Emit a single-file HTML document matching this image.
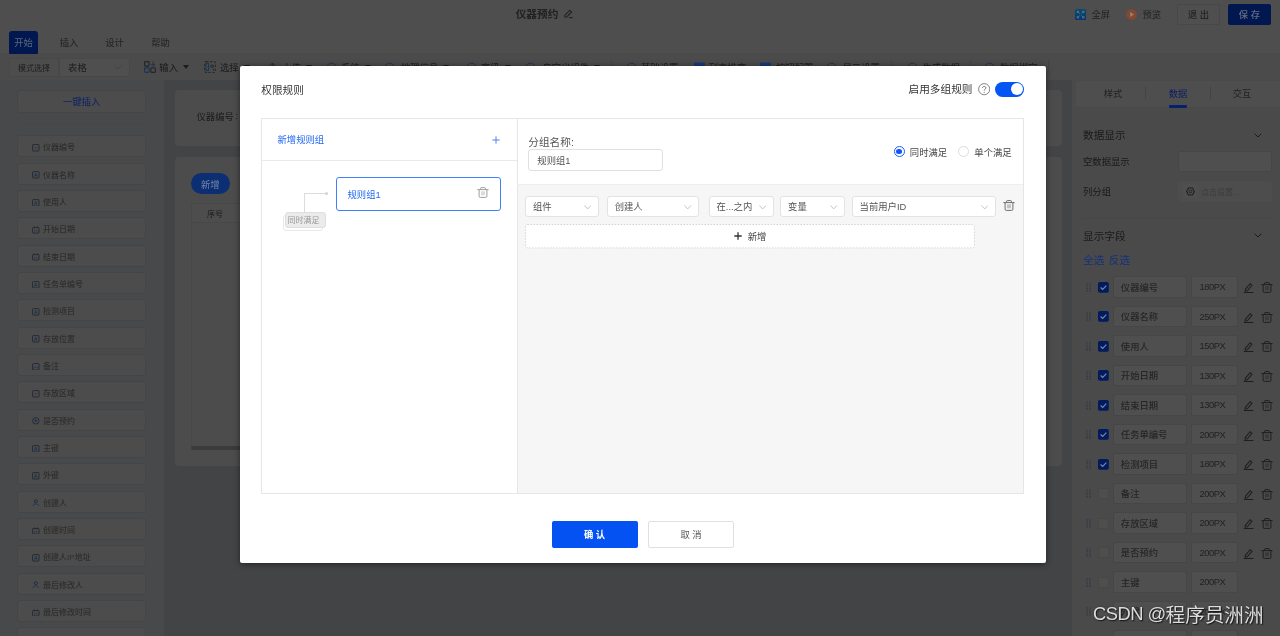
<!DOCTYPE html>
<html lang="zh-CN">
<head>
<meta charset="utf-8">
<title>仪器预约</title>
<style>
html,body{margin:0;padding:0;}
body{width:1280px;height:636px;overflow:hidden;background:#434446;font-family:"Liberation Sans","Noto Sans CJK SC",sans-serif;font-size:9.33px;color:#1d1d1d;}
#app{position:relative;width:1280px;height:636px;overflow:hidden;background:#434446;will-change:transform;}
#app div,#app span,#app svg{position:absolute;box-sizing:border-box;}
.c{display:flex;align-items:center;justify-content:center;white-space:nowrap;}
.l{display:flex;align-items:center;justify-content:flex-start;white-space:nowrap;}
.t{white-space:nowrap;line-height:1;}
</style>
</head>
<body>
<div id="app">
<!-- top bar -->
<div style="left:0px;top:0px;width:1280px;height:53px;background:#4e4e4e;"></div><div style="left:0px;top:53px;width:1280px;height:27px;background:#4b4b4b;"></div><div class="c" style="left:500px;top:3.9px;width:74px;height:20px;font-size:10.67px;font-weight:bold;color:#202020;">仪器预约</div><svg style="left:563.2px;top:8.4px;width:11px;height:11px" viewBox="0 0 11 11" fill="none" stroke="#222" stroke-width="1.1"><path d="M2 7.2 L6.8 2.2 L8.6 4 L3.8 9 L1.8 9.2 Z"/><path d="M6 9.6 H9.6"/></svg>
<div class="c" style="left:9px;top:31px;width:29px;height:22.8px;background:#00184f;border-radius:3px 3px 1px 1px;color:#5d6682;padding-bottom:1.5px;">开始</div><div class="c" style="left:54px;top:30px;width:30px;height:23px;color:#222222;">插入</div><div class="c" style="left:99.5px;top:30px;width:30px;height:23px;color:#222222;">设计</div><div class="c" style="left:145.5px;top:30px;width:30px;height:23px;color:#222222;">帮助</div><svg style="left:1075px;top:8.7px;width:11.2px;height:11.2px" viewBox="0 0 11 11"><defs><linearGradient id="fsg" x1="0" y1="0" x2="0" y2="1"><stop offset="0" stop-color="#0b4c66"/><stop offset="1" stop-color="#093474"/></linearGradient></defs><rect x="0" y="0" width="11" height="11" rx="2" fill="url(#fsg)"/><g fill="none" stroke="#647a90" stroke-width="0.9"><path d="M2.2 4 V2.2 H4 M2.4 2.4 L4.6 4.6"/><path d="M7 2.2 H8.8 V4 M8.6 2.4 L6.4 4.6"/><path d="M2.2 7 V8.8 H4 M2.4 8.6 L4.6 6.4"/><path d="M7 8.8 H8.8 V7 M8.6 8.6 L6.4 6.4"/></g></svg>
<div class="l" style="left:1091.5px;top:4.3px;width:22px;height:20px;color:#222222;">全屏</div><svg style="left:1126.2px;top:8.9px;width:11px;height:11px" viewBox="0 0 11 11"><circle cx="5.5" cy="5.5" r="5.4" fill="#824830"/><path d="M4.1 3.1 L8.1 5.5 L4.1 7.9 Z" fill="#93807a"/></svg>
<div class="l" style="left:1142.5px;top:4.3px;width:22px;height:20px;color:#222222;">预览</div><div class="c" style="left:1176.8px;top:4.1px;width:43.4px;height:21.4px;border:1px solid #484848;border-radius:2px;color:#242424;font-weight:500;background:#4f4f4f;padding-bottom:1px;">退 出</div><div class="c" style="left:1227.8px;top:4.1px;width:43.4px;height:21.4px;border-radius:2px;color:#646b82;font-weight:500;background:#00184f;padding-bottom:1px;">保 存</div><!-- toolbar -->
<div class="c" style="left:8.8px;top:57.9px;width:50.6px;height:19px;border:1px solid #484848;border-radius:2px 0 0 2px;background:#4d4d4d;font-size:8px;color:#1c1c1c;">模式选择</div><div class="l" style="left:58.6px;top:57.9px;width:71.3px;height:19px;border:1px solid #484848;border-radius:0 2px 2px 0;background:#4f4f4f;color:#1c1c1c;padding-left:8.5px;">表格</div><svg style="left:113.5px;top:64.5px;width:8px;height:5px" viewBox="0 0 8 5" fill="none" stroke="#404040" stroke-width="0.8"><path d="M0.5 0.5 L4 4 L7.5 0.5"/></svg>
<svg style="left:143.8px;top:61px;width:12px;height:12px" viewBox="0 0 12 12" fill="none" stroke="#262626" stroke-width="1.15"><rect x="0.6" y="0.6" width="4.5" height="4.5" rx="0.8"/><rect x="0.6" y="6.9" width="4.5" height="4.5" rx="0.8" stroke="#1b3552"/><rect x="6.9" y="6.9" width="4.5" height="4.5" rx="0.8"/><path d="M6.7 3.7 H11.4 M9.2 0.7 V5.5" stroke="#1b3552"/></svg><div class="l" style="left:159.3px;top:56.5px;width:60px;height:20px;color:#1a1a1a;">输入</div><svg style="left:183.2px;top:65px;width:6px;height:4px" viewBox="0 0 6 4"><path d="M0 0 H6 L3 4 Z" fill="#1c1c1c"/></svg>
<svg style="left:204.2px;top:61px;width:12px;height:12px" viewBox="0 0 12 12" fill="none" stroke="#292929" stroke-width="1.05"><rect x="0.6" y="0.6" width="10.8" height="10.8" rx="1.6" stroke-dasharray="2.3 1.5"/><rect x="2" y="2.6" width="2.6" height="6.8" stroke="#1b3552"/><circle cx="8.1" cy="5.2" r="1.3"/><path d="M9 8 L10.1 9.6"/></svg><div class="l" style="left:220px;top:56.5px;width:60px;height:20px;color:#1a1a1a;">选择</div><svg style="left:244px;top:65px;width:6px;height:4px" viewBox="0 0 6 4"><path d="M0 0 H6 L3 4 Z" fill="#1c1c1c"/></svg>
<svg style="left:266.5px;top:62.3px;width:11px;height:11px" viewBox="0 0 11 11" fill="none" stroke="#2a2a2a" stroke-width="1"><path d="M1 5.5 L5.5 1 L10 5.5 M5.5 1.2 V8 M1 10 H10"/></svg><div class="l" style="left:282.5px;top:56.5px;width:60px;height:20px;color:#1a1a1a;">上传</div><svg style="left:306px;top:65px;width:6px;height:4px" viewBox="0 0 6 4"><path d="M0 0 H6 L3 4 Z" fill="#1c1c1c"/></svg>
<svg style="left:326px;top:62.3px;width:11px;height:11px" viewBox="0 0 11 11" fill="none" stroke="#1f3350" stroke-width="1"><circle cx="5.5" cy="5.5" r="4.4"/></svg><div class="l" style="left:341px;top:56.5px;width:60px;height:20px;color:#1a1a1a;">系统</div><svg style="left:365px;top:65px;width:6px;height:4px" viewBox="0 0 6 4"><path d="M0 0 H6 L3 4 Z" fill="#1c1c1c"/></svg>
<svg style="left:384px;top:62.3px;width:11px;height:11px" viewBox="0 0 11 11" fill="none" stroke="#1f3350" stroke-width="1"><circle cx="5.5" cy="5.5" r="4.4"/></svg><div class="l" style="left:401px;top:56.5px;width:60px;height:20px;color:#1a1a1a;">地理信息</div><svg style="left:443px;top:65px;width:6px;height:4px" viewBox="0 0 6 4"><path d="M0 0 H6 L3 4 Z" fill="#1c1c1c"/></svg>
<svg style="left:466px;top:62.3px;width:11px;height:11px" viewBox="0 0 11 11" fill="none" stroke="#1f3350" stroke-width="1"><circle cx="5.5" cy="5.5" r="4.4"/></svg><div class="l" style="left:481px;top:56.5px;width:60px;height:20px;color:#1a1a1a;">高级</div><svg style="left:505px;top:65px;width:6px;height:4px" viewBox="0 0 6 4"><path d="M0 0 H6 L3 4 Z" fill="#1c1c1c"/></svg>
<svg style="left:525px;top:62.3px;width:11px;height:11px" viewBox="0 0 11 11" fill="none" stroke="#1f3350" stroke-width="1"><circle cx="5.5" cy="5.5" r="4.4"/></svg><div class="l" style="left:542.5px;top:56.5px;width:60px;height:20px;color:#1a1a1a;">自定义组件</div><svg style="left:594px;top:65px;width:6px;height:4px" viewBox="0 0 6 4"><path d="M0 0 H6 L3 4 Z" fill="#1c1c1c"/></svg>
<div style="left:610.5px;top:60px;width:1px;height:14px;background:#444444;"></div><svg style="left:626px;top:62.3px;width:11px;height:11px" viewBox="0 0 11 11" fill="none" stroke="#1f3350" stroke-width="1"><circle cx="5.5" cy="5.5" r="4.4"/></svg><div class="l" style="left:641px;top:56.5px;width:60px;height:20px;color:#1a1a1a;">基础设置</div>
<svg style="left:693.5px;top:61.5px;width:11px;height:11px" viewBox="0 0 11 11"><rect x="0" y="0.5" width="11" height="10" rx="1" fill="#17397a"/></svg><div class="l" style="left:708.7px;top:56.5px;width:60px;height:20px;color:#1a1a1a;">列表排序</div>
<svg style="left:760px;top:61.5px;width:11px;height:11px" viewBox="0 0 11 11"><rect x="0" y="0.5" width="11" height="10" rx="1" fill="#17397a"/></svg><div class="l" style="left:776px;top:56.5px;width:60px;height:20px;color:#1a1a1a;">按钮配置</div>
<svg style="left:826px;top:62.3px;width:11px;height:11px" viewBox="0 0 11 11" fill="none" stroke="#1f3350" stroke-width="1"><circle cx="5.5" cy="5.5" r="4.4"/></svg><div class="l" style="left:842.5px;top:56.5px;width:60px;height:20px;color:#1a1a1a;">显示设置</div>
<div style="left:891px;top:60px;width:1px;height:14px;background:#444444;"></div><svg style="left:907px;top:62.3px;width:11px;height:11px" viewBox="0 0 11 11" fill="none" stroke="#1f3350" stroke-width="1"><circle cx="5.5" cy="5.5" r="4.4"/></svg><div class="l" style="left:922.5px;top:56.5px;width:60px;height:20px;color:#1a1a1a;">生成数据</div>
<div style="left:969.5px;top:60px;width:1px;height:14px;background:#444444;"></div><svg style="left:984px;top:62.3px;width:11px;height:11px" viewBox="0 0 11 11" fill="none" stroke="#1f3350" stroke-width="1"><circle cx="5.5" cy="5.5" r="4.4"/></svg><div class="l" style="left:1000px;top:56.5px;width:60px;height:20px;color:#1a1a1a;">数据绑定</div>
<div style="left:1048px;top:60px;width:1px;height:14px;background:#444444;"></div><!-- sidebar -->
<div style="left:0px;top:80px;width:163.5px;height:556px;background:#48494b;"></div><div class="c" style="left:17.3px;top:90.3px;width:128.6px;height:22.3px;border:1px solid #444546;border-radius:3px;background:#4c4c4c;color:#0d2268;padding-bottom:0.6px;">一键插入</div><div style="left:17.3px;top:122.8px;width:128.6px;height:1px;background:#464749;"></div><div style="left:17.3px;top:135.2px;width:128.6px;height:22.0px;border:1px solid #444546;border-radius:3px;background:#4c4c4c;"><svg style="left:13.9px;top:7.9px;width:7.6px;height:7.6px" viewBox="0 0 8 8" fill="none" stroke="#26282f" stroke-width="0.95"><rect x="0.6" y="0.6" width="6.8" height="6.8" rx="0.8"/><path d="M2.4 3.3 L4 4.9 L5.6 3.3" stroke="#1b3663"/></svg><span class="l" style="left:24.8px;top:0.5px;height:20px;font-size:8px;color:#2e2e2e;font-weight:500;">仪器编号</span></div>
<div style="left:17.3px;top:162.53px;width:128.6px;height:22.0px;border:1px solid #444546;border-radius:3px;background:#4c4c4c;"><svg style="left:13.9px;top:7.9px;width:7.6px;height:7.6px" viewBox="0 0 8 8" fill="none" stroke="#26282f" stroke-width="0.95"><rect x="0.6" y="0.6" width="6.8" height="6.8" rx="0.8"/><path d="M2.6 6.1 L4 2.1 L5.4 6.1 M3.1 4.8 H4.9" stroke="#1b3663"/></svg><span class="l" style="left:24.8px;top:0.5px;height:20px;font-size:8px;color:#2e2e2e;font-weight:500;">仪器名称</span></div>
<div style="left:17.3px;top:189.87px;width:128.6px;height:22.0px;border:1px solid #444546;border-radius:3px;background:#4c4c4c;"><svg style="left:13.9px;top:7.9px;width:7.6px;height:7.6px" viewBox="0 0 8 8" fill="none" stroke="#26282f" stroke-width="0.95"><rect x="0.6" y="0.6" width="6.8" height="6.8" rx="0.8"/><path d="M2.6 6.1 L4 2.1 L5.4 6.1 M3.1 4.8 H4.9" stroke="#1b3663"/></svg><span class="l" style="left:24.8px;top:0.5px;height:20px;font-size:8px;color:#2e2e2e;font-weight:500;">使用人</span></div>
<div style="left:17.3px;top:217.2px;width:128.6px;height:22.0px;border:1px solid #444546;border-radius:3px;background:#4c4c4c;"><svg style="left:13.9px;top:7.9px;width:7.6px;height:7.6px" viewBox="0 0 8 8" fill="none" stroke="#26282f" stroke-width="0.95"><rect x="0.6" y="1.6" width="6.8" height="5.8" rx="0.8"/><path d="M2.3 0.4 V2.2 M5.7 0.4 V2.2"/><path d="M2.8 4 V6 M5.2 4 V6" stroke="#1b3663"/></svg><span class="l" style="left:24.8px;top:0.5px;height:20px;font-size:8px;color:#2e2e2e;font-weight:500;">开始日期</span></div>
<div style="left:17.3px;top:244.53px;width:128.6px;height:22.0px;border:1px solid #444546;border-radius:3px;background:#4c4c4c;"><svg style="left:13.9px;top:7.9px;width:7.6px;height:7.6px" viewBox="0 0 8 8" fill="none" stroke="#26282f" stroke-width="0.95"><rect x="0.6" y="1.6" width="6.8" height="5.8" rx="0.8"/><path d="M2.3 0.4 V2.2 M5.7 0.4 V2.2"/><path d="M2.8 4 V6 M5.2 4 V6" stroke="#1b3663"/></svg><span class="l" style="left:24.8px;top:0.5px;height:20px;font-size:8px;color:#2e2e2e;font-weight:500;">结束日期</span></div>
<div style="left:17.3px;top:271.87px;width:128.6px;height:22.0px;border:1px solid #444546;border-radius:3px;background:#4c4c4c;"><svg style="left:13.9px;top:7.9px;width:7.6px;height:7.6px" viewBox="0 0 8 8" fill="none" stroke="#26282f" stroke-width="0.95"><rect x="0.6" y="0.6" width="6.8" height="6.8" rx="0.8"/><path d="M2.6 6.1 L4 2.1 L5.4 6.1 M3.1 4.8 H4.9" stroke="#1b3663"/></svg><span class="l" style="left:24.8px;top:0.5px;height:20px;font-size:8px;color:#2e2e2e;font-weight:500;">任务单编号</span></div>
<div style="left:17.3px;top:299.2px;width:128.6px;height:22.0px;border:1px solid #444546;border-radius:3px;background:#4c4c4c;"><svg style="left:13.9px;top:7.9px;width:7.6px;height:7.6px" viewBox="0 0 8 8" fill="none" stroke="#26282f" stroke-width="0.95"><rect x="0.6" y="0.6" width="6.8" height="6.8" rx="0.8"/><path d="M2.6 6.1 L4 2.1 L5.4 6.1 M3.1 4.8 H4.9" stroke="#1b3663"/></svg><span class="l" style="left:24.8px;top:0.5px;height:20px;font-size:8px;color:#2e2e2e;font-weight:500;">检测项目</span></div>
<div style="left:17.3px;top:326.53px;width:128.6px;height:22.0px;border:1px solid #444546;border-radius:3px;background:#4c4c4c;"><svg style="left:13.9px;top:7.9px;width:7.6px;height:7.6px" viewBox="0 0 8 8" fill="none" stroke="#26282f" stroke-width="0.95"><rect x="0.6" y="0.6" width="6.8" height="6.8" rx="0.8"/><path d="M2.6 6.1 L4 2.1 L5.4 6.1 M3.1 4.8 H4.9" stroke="#1b3663"/></svg><span class="l" style="left:24.8px;top:0.5px;height:20px;font-size:8px;color:#2e2e2e;font-weight:500;">存放位置</span></div>
<div style="left:17.3px;top:353.86px;width:128.6px;height:22.0px;border:1px solid #444546;border-radius:3px;background:#4c4c4c;"><svg style="left:13.9px;top:7.9px;width:7.6px;height:7.6px" viewBox="0 0 8 8" fill="none" stroke="#26282f" stroke-width="0.95"><rect x="0.6" y="0.6" width="6.8" height="6.8" rx="0.8"/><path d="M1.4 6 L3.2 3.8 L4.6 5.2 L5.4 4.4 L6.6 6" stroke="#1b3663"/></svg><span class="l" style="left:24.8px;top:0.5px;height:20px;font-size:8px;color:#2e2e2e;font-weight:500;">备注</span></div>
<div style="left:17.3px;top:381.2px;width:128.6px;height:22.0px;border:1px solid #444546;border-radius:3px;background:#4c4c4c;"><svg style="left:13.9px;top:7.9px;width:7.6px;height:7.6px" viewBox="0 0 8 8" fill="none" stroke="#26282f" stroke-width="0.95"><rect x="0.6" y="0.6" width="6.8" height="6.8" rx="0.8"/><path d="M2.4 3.3 L4 4.9 L5.6 3.3" stroke="#1b3663"/></svg><span class="l" style="left:24.8px;top:0.5px;height:20px;font-size:8px;color:#2e2e2e;font-weight:500;">存放区域</span></div>
<div style="left:17.3px;top:408.53px;width:128.6px;height:22.0px;border:1px solid #444546;border-radius:3px;background:#4c4c4c;"><svg style="left:13.9px;top:7.9px;width:7.6px;height:7.6px" viewBox="0 0 8 8" fill="none" stroke="#26282f" stroke-width="0.95"><circle cx="4" cy="4" r="3.4"/><circle cx="4" cy="4" r="1.5" fill="#1b3663" stroke="none"/></svg><span class="l" style="left:24.8px;top:0.5px;height:20px;font-size:8px;color:#2e2e2e;font-weight:500;">是否预约</span></div>
<div style="left:17.3px;top:435.86px;width:128.6px;height:22.0px;border:1px solid #444546;border-radius:3px;background:#4c4c4c;"><svg style="left:13.9px;top:7.9px;width:7.6px;height:7.6px" viewBox="0 0 8 8" fill="none" stroke="#26282f" stroke-width="0.95"><rect x="0.6" y="0.6" width="6.8" height="6.8" rx="0.8"/><path d="M2.6 6.1 L4 2.1 L5.4 6.1 M3.1 4.8 H4.9" stroke="#1b3663"/></svg><span class="l" style="left:24.8px;top:0.5px;height:20px;font-size:8px;color:#2e2e2e;font-weight:500;">主键</span></div>
<div style="left:17.3px;top:463.2px;width:128.6px;height:22.0px;border:1px solid #444546;border-radius:3px;background:#4c4c4c;"><svg style="left:13.9px;top:7.9px;width:7.6px;height:7.6px" viewBox="0 0 8 8" fill="none" stroke="#26282f" stroke-width="0.95"><rect x="0.6" y="0.6" width="6.8" height="6.8" rx="0.8"/><path d="M2.6 6.1 L4 2.1 L5.4 6.1 M3.1 4.8 H4.9" stroke="#1b3663"/></svg><span class="l" style="left:24.8px;top:0.5px;height:20px;font-size:8px;color:#2e2e2e;font-weight:500;">外键</span></div>
<div style="left:17.3px;top:490.53px;width:128.6px;height:22.0px;border:1px solid #444546;border-radius:3px;background:#4c4c4c;"><svg style="left:13.9px;top:7.9px;width:7.6px;height:7.6px" viewBox="0 0 8 8" fill="none" stroke="#26282f" stroke-width="0.95"><circle cx="4" cy="2.4" r="1.6"/><path d="M0.8 7.4 C1.2 4.6 6.8 4.6 7.2 7.4" stroke="#1b3663"/></svg><span class="l" style="left:24.8px;top:0.5px;height:20px;font-size:8px;color:#2e2e2e;font-weight:500;">创建人</span></div>
<div style="left:17.3px;top:517.86px;width:128.6px;height:22.0px;border:1px solid #444546;border-radius:3px;background:#4c4c4c;"><svg style="left:13.9px;top:7.9px;width:7.6px;height:7.6px" viewBox="0 0 8 8" fill="none" stroke="#26282f" stroke-width="0.95"><rect x="0.6" y="1.6" width="6.8" height="5.8" rx="0.8"/><path d="M2.3 0.4 V2.2 M5.7 0.4 V2.2"/><path d="M2.8 4 V6 M5.2 4 V6" stroke="#1b3663"/></svg><span class="l" style="left:24.8px;top:0.5px;height:20px;font-size:8px;color:#2e2e2e;font-weight:500;">创建时间</span></div>
<div style="left:17.3px;top:545.19px;width:128.6px;height:22.0px;border:1px solid #444546;border-radius:3px;background:#4c4c4c;"><svg style="left:13.9px;top:7.9px;width:7.6px;height:7.6px" viewBox="0 0 8 8" fill="none" stroke="#26282f" stroke-width="0.95"><rect x="0.6" y="0.6" width="6.8" height="6.8" rx="0.8"/><path d="M2.6 6.1 L4 2.1 L5.4 6.1 M3.1 4.8 H4.9" stroke="#1b3663"/></svg><span class="l" style="left:24.8px;top:0.5px;height:20px;font-size:8px;color:#2e2e2e;font-weight:500;">创建人IP地址</span></div>
<div style="left:17.3px;top:572.53px;width:128.6px;height:22.0px;border:1px solid #444546;border-radius:3px;background:#4c4c4c;"><svg style="left:13.9px;top:7.9px;width:7.6px;height:7.6px" viewBox="0 0 8 8" fill="none" stroke="#26282f" stroke-width="0.95"><circle cx="4" cy="2.4" r="1.6"/><path d="M0.8 7.4 C1.2 4.6 6.8 4.6 7.2 7.4" stroke="#1b3663"/></svg><span class="l" style="left:24.8px;top:0.5px;height:20px;font-size:8px;color:#2e2e2e;font-weight:500;">最后修改人</span></div>
<div style="left:17.3px;top:599.86px;width:128.6px;height:22.0px;border:1px solid #444546;border-radius:3px;background:#4c4c4c;"><svg style="left:13.9px;top:7.9px;width:7.6px;height:7.6px" viewBox="0 0 8 8" fill="none" stroke="#26282f" stroke-width="0.95"><rect x="0.6" y="1.6" width="6.8" height="5.8" rx="0.8"/><path d="M2.3 0.4 V2.2 M5.7 0.4 V2.2"/><path d="M2.8 4 V6 M5.2 4 V6" stroke="#1b3663"/></svg><span class="l" style="left:24.8px;top:0.5px;height:20px;font-size:8px;color:#2e2e2e;font-weight:500;">最后修改时间</span></div>
<div style="left:17.3px;top:627.19px;width:128.6px;height:22.0px;border:1px solid #444546;border-radius:3px;background:#4c4c4c;"></div>
<!-- canvas -->
<div style="left:174.7px;top:89.9px;width:887px;height:56.3px;background:#4c4c4c;border-radius:4px;"></div><div class="l" style="left:196.5px;top:106px;width:60px;height:20px;color:#1a1a1a;">仪器编号<i style="font-style:normal;margin-left:1.6px">:</i></div><div style="left:174.7px;top:156.9px;width:887px;height:308.9px;background:#4c4c4c;border-radius:4px;"></div><div class="c" style="left:190.7px;top:173px;width:39.3px;height:21.3px;background:#0b2f72;border-radius:11px;color:#7686a8;">新增</div><div style="left:191px;top:203px;width:855px;height:246px;border:1px solid #484848;border-bottom:none;"></div><div style="left:191.5px;top:203.5px;width:854px;height:19px;background:#4d4d4d;border-bottom:1px solid #484848;"></div><div class="c" style="left:200px;top:203.5px;width:30px;height:19px;font-size:8px;color:#1a1a1a;">序号</div><div style="left:190.7px;top:446.2px;width:400px;height:3.8px;background:#3b3b3b;border-radius:2px;"></div><!-- right panel -->
<div style="left:1072px;top:80px;width:208px;height:556px;background:#4a4a4a;"></div><div style="left:1076px;top:80.5px;width:204px;height:26px;background:#4e4e4e;border-radius:2px 0 0 2px;"></div><div class="c" style="left:1098px;top:82.6px;width:30px;height:20px;color:#222222;">样式</div><div class="c" style="left:1163px;top:82.6px;width:30px;height:20px;color:#0a1e62;">数据</div><div class="c" style="left:1227px;top:82.6px;width:30px;height:20px;color:#222222;">交互</div><div style="left:1145px;top:86px;width:1px;height:14px;background:#444;"></div><div style="left:1210.3px;top:86px;width:1px;height:14px;background:#444;"></div><div style="left:1168.6px;top:105.2px;width:18.6px;height:2.6px;background:#04206e;border-radius:1px;"></div><div class="l" style="left:1083px;top:124px;width:60px;height:20px;font-size:10.67px;color:#1a1a1a;">数据显示</div><svg style="left:1253.7px;top:132.5px;width:8px;height:5px" viewBox="0 0 8 5" fill="none" stroke="#1c1c1c" stroke-width="1"><path d="M0.7 0.7 L4 4 L7.3 0.7"/></svg>
<div class="l" style="left:1083px;top:150.6px;width:60px;height:20px;color:#1a1a1a;">空数据显示</div><div style="left:1178.3px;top:151.2px;width:94px;height:21.3px;border:1px solid #464646;border-radius:2.5px;background:#4f4f4f;"></div><div class="l" style="left:1083px;top:180.7px;width:60px;height:20px;color:#1a1a1a;">列分组</div><div style="left:1178.3px;top:180.6px;width:94px;height:21.3px;border-radius:2.5px;background:#4d4d4d;"></div><div style="left:1183.2px;top:183.8px;width:14.6px;height:14.6px;background:#4f4f4f;border-radius:2px;"></div><svg style="left:1186.3px;top:186.8px;width:9px;height:9px" viewBox="0 0 9 9" fill="none" stroke="#1f1f24" stroke-width="1.1"><path d="M2.5 1 H6.5 L8.4 4.5 L6.5 8 H2.5 L0.6 4.5 Z"/><circle cx="4.5" cy="4.5" r="1.4" stroke-width="0.9"/></svg>
<div class="l" style="left:1201px;top:181.6px;width:60px;height:20px;color:#3c3c3f;font-size:8px;">点击设置...</div><div style="left:1083px;top:217.7px;width:189px;height:1px;background:#464646;"></div><div class="l" style="left:1083px;top:225.5px;width:60px;height:20px;font-size:10.67px;color:#1a1a1a;">显示字段</div><svg style="left:1253.7px;top:233px;width:8px;height:5px" viewBox="0 0 8 5" fill="none" stroke="#1c1c1c" stroke-width="1"><path d="M0.7 0.7 L4 4 L7.3 0.7"/></svg>
<div class="l" style="left:1083px;top:249.6px;width:60px;height:20px;font-size:10.67px;color:#15317d;word-spacing:1.5px;">全选 反选</div><svg style="left:1086px;top:282.90px;width:5px;height:9px" viewBox="0 0 5 9" fill="#33384a"><circle cx="1" cy="1" r="0.8"/><circle cx="4" cy="1" r="0.8"/><circle cx="1" cy="3.3" r="0.8"/><circle cx="4" cy="3.3" r="0.8"/><circle cx="1" cy="5.6" r="0.8"/><circle cx="4" cy="5.6" r="0.8"/><circle cx="1" cy="7.9" r="0.8"/><circle cx="4" cy="7.9" r="0.8"/></svg><svg style="left:1098px;top:281.80px;width:10.8px;height:10.8px" viewBox="0 0 10.8 10.8"><rect width="10.8" height="10.8" rx="1.8" fill="#011b5e"/><path d="M2.6 5.5 L4.7 7.5 L8.3 3.6" fill="none" stroke="#7d87a2" stroke-width="1.15"/></svg><div class="l" style="left:1112.8px;top:276.3px;width:74.2px;height:21.6px;border:1px solid #464646;border-radius:2px;background:#4f4f4f;color:#262626;font-weight:500;padding-left:7px;padding-bottom:0.8px;">仪器编号</div><div class="l" style="left:1190.6px;top:276.3px;width:47px;height:21.6px;border:1px solid #464646;border-radius:2px;background:#4f4f4f;color:#222;padding-left:7.8px;letter-spacing:-0.4px;padding-top:0.8px;">180PX</div><svg style="left:1242.6px;top:282.0px;width:11.2px;height:11.2px" viewBox="0 0 10 10" fill="none" stroke="#1e1e1e" stroke-width="0.95"><path d="M2.2 6.4 L6.4 1.5 L8 3 L3.8 7.8 L1.9 8.1 Z"/><path d="M0.7 9.4 H9.3"/></svg><svg style="left:1261.0px;top:282.2px;width:12px;height:11px" viewBox="0 0 12 11" fill="none" stroke="#1e1e1e" stroke-width="0.95"><path d="M0.4 2.6 H11.6 M3.6 2.4 V1.3 Q3.6 0.6 4.3 0.6 H7.7 Q8.4 0.6 8.4 1.3 V2.4 M2.1 2.8 V9.2 Q2.1 10.4 3.3 10.4 H8.7 Q9.9 10.4 9.9 9.2 V2.8"/><path d="M5 4.3 V8.3 M7 4.3 V8.3" stroke-width="0.7"/></svg>
<svg style="left:1086px;top:312.40px;width:5px;height:9px" viewBox="0 0 5 9" fill="#33384a"><circle cx="1" cy="1" r="0.8"/><circle cx="4" cy="1" r="0.8"/><circle cx="1" cy="3.3" r="0.8"/><circle cx="4" cy="3.3" r="0.8"/><circle cx="1" cy="5.6" r="0.8"/><circle cx="4" cy="5.6" r="0.8"/><circle cx="1" cy="7.9" r="0.8"/><circle cx="4" cy="7.9" r="0.8"/></svg><svg style="left:1098px;top:311.30px;width:10.8px;height:10.8px" viewBox="0 0 10.8 10.8"><rect width="10.8" height="10.8" rx="1.8" fill="#011b5e"/><path d="M2.6 5.5 L4.7 7.5 L8.3 3.6" fill="none" stroke="#7d87a2" stroke-width="1.15"/></svg><div class="l" style="left:1112.8px;top:305.8px;width:74.2px;height:21.6px;border:1px solid #464646;border-radius:2px;background:#4f4f4f;color:#262626;font-weight:500;padding-left:7px;padding-bottom:0.8px;">仪器名称</div><div class="l" style="left:1190.6px;top:305.8px;width:47px;height:21.6px;border:1px solid #464646;border-radius:2px;background:#4f4f4f;color:#222;padding-left:7.8px;letter-spacing:-0.4px;padding-top:0.8px;">250PX</div><svg style="left:1242.6px;top:311.5px;width:11.2px;height:11.2px" viewBox="0 0 10 10" fill="none" stroke="#1e1e1e" stroke-width="0.95"><path d="M2.2 6.4 L6.4 1.5 L8 3 L3.8 7.8 L1.9 8.1 Z"/><path d="M0.7 9.4 H9.3"/></svg><svg style="left:1261.0px;top:311.7px;width:12px;height:11px" viewBox="0 0 12 11" fill="none" stroke="#1e1e1e" stroke-width="0.95"><path d="M0.4 2.6 H11.6 M3.6 2.4 V1.3 Q3.6 0.6 4.3 0.6 H7.7 Q8.4 0.6 8.4 1.3 V2.4 M2.1 2.8 V9.2 Q2.1 10.4 3.3 10.4 H8.7 Q9.9 10.4 9.9 9.2 V2.8"/><path d="M5 4.3 V8.3 M7 4.3 V8.3" stroke-width="0.7"/></svg>
<svg style="left:1086px;top:341.90px;width:5px;height:9px" viewBox="0 0 5 9" fill="#33384a"><circle cx="1" cy="1" r="0.8"/><circle cx="4" cy="1" r="0.8"/><circle cx="1" cy="3.3" r="0.8"/><circle cx="4" cy="3.3" r="0.8"/><circle cx="1" cy="5.6" r="0.8"/><circle cx="4" cy="5.6" r="0.8"/><circle cx="1" cy="7.9" r="0.8"/><circle cx="4" cy="7.9" r="0.8"/></svg><svg style="left:1098px;top:340.80px;width:10.8px;height:10.8px" viewBox="0 0 10.8 10.8"><rect width="10.8" height="10.8" rx="1.8" fill="#011b5e"/><path d="M2.6 5.5 L4.7 7.5 L8.3 3.6" fill="none" stroke="#7d87a2" stroke-width="1.15"/></svg><div class="l" style="left:1112.8px;top:335.3px;width:74.2px;height:21.6px;border:1px solid #464646;border-radius:2px;background:#4f4f4f;color:#262626;font-weight:500;padding-left:7px;padding-bottom:0.8px;">使用人</div><div class="l" style="left:1190.6px;top:335.3px;width:47px;height:21.6px;border:1px solid #464646;border-radius:2px;background:#4f4f4f;color:#222;padding-left:7.8px;letter-spacing:-0.4px;padding-top:0.8px;">150PX</div><svg style="left:1242.6px;top:341.0px;width:11.2px;height:11.2px" viewBox="0 0 10 10" fill="none" stroke="#1e1e1e" stroke-width="0.95"><path d="M2.2 6.4 L6.4 1.5 L8 3 L3.8 7.8 L1.9 8.1 Z"/><path d="M0.7 9.4 H9.3"/></svg><svg style="left:1261.0px;top:341.2px;width:12px;height:11px" viewBox="0 0 12 11" fill="none" stroke="#1e1e1e" stroke-width="0.95"><path d="M0.4 2.6 H11.6 M3.6 2.4 V1.3 Q3.6 0.6 4.3 0.6 H7.7 Q8.4 0.6 8.4 1.3 V2.4 M2.1 2.8 V9.2 Q2.1 10.4 3.3 10.4 H8.7 Q9.9 10.4 9.9 9.2 V2.8"/><path d="M5 4.3 V8.3 M7 4.3 V8.3" stroke-width="0.7"/></svg>
<svg style="left:1086px;top:371.40px;width:5px;height:9px" viewBox="0 0 5 9" fill="#33384a"><circle cx="1" cy="1" r="0.8"/><circle cx="4" cy="1" r="0.8"/><circle cx="1" cy="3.3" r="0.8"/><circle cx="4" cy="3.3" r="0.8"/><circle cx="1" cy="5.6" r="0.8"/><circle cx="4" cy="5.6" r="0.8"/><circle cx="1" cy="7.9" r="0.8"/><circle cx="4" cy="7.9" r="0.8"/></svg><svg style="left:1098px;top:370.30px;width:10.8px;height:10.8px" viewBox="0 0 10.8 10.8"><rect width="10.8" height="10.8" rx="1.8" fill="#011b5e"/><path d="M2.6 5.5 L4.7 7.5 L8.3 3.6" fill="none" stroke="#7d87a2" stroke-width="1.15"/></svg><div class="l" style="left:1112.8px;top:364.8px;width:74.2px;height:21.6px;border:1px solid #464646;border-radius:2px;background:#4f4f4f;color:#262626;font-weight:500;padding-left:7px;padding-bottom:0.8px;">开始日期</div><div class="l" style="left:1190.6px;top:364.8px;width:47px;height:21.6px;border:1px solid #464646;border-radius:2px;background:#4f4f4f;color:#222;padding-left:7.8px;letter-spacing:-0.4px;padding-top:0.8px;">130PX</div><svg style="left:1242.6px;top:370.5px;width:11.2px;height:11.2px" viewBox="0 0 10 10" fill="none" stroke="#1e1e1e" stroke-width="0.95"><path d="M2.2 6.4 L6.4 1.5 L8 3 L3.8 7.8 L1.9 8.1 Z"/><path d="M0.7 9.4 H9.3"/></svg><svg style="left:1261.0px;top:370.7px;width:12px;height:11px" viewBox="0 0 12 11" fill="none" stroke="#1e1e1e" stroke-width="0.95"><path d="M0.4 2.6 H11.6 M3.6 2.4 V1.3 Q3.6 0.6 4.3 0.6 H7.7 Q8.4 0.6 8.4 1.3 V2.4 M2.1 2.8 V9.2 Q2.1 10.4 3.3 10.4 H8.7 Q9.9 10.4 9.9 9.2 V2.8"/><path d="M5 4.3 V8.3 M7 4.3 V8.3" stroke-width="0.7"/></svg>
<svg style="left:1086px;top:400.90px;width:5px;height:9px" viewBox="0 0 5 9" fill="#33384a"><circle cx="1" cy="1" r="0.8"/><circle cx="4" cy="1" r="0.8"/><circle cx="1" cy="3.3" r="0.8"/><circle cx="4" cy="3.3" r="0.8"/><circle cx="1" cy="5.6" r="0.8"/><circle cx="4" cy="5.6" r="0.8"/><circle cx="1" cy="7.9" r="0.8"/><circle cx="4" cy="7.9" r="0.8"/></svg><svg style="left:1098px;top:399.80px;width:10.8px;height:10.8px" viewBox="0 0 10.8 10.8"><rect width="10.8" height="10.8" rx="1.8" fill="#011b5e"/><path d="M2.6 5.5 L4.7 7.5 L8.3 3.6" fill="none" stroke="#7d87a2" stroke-width="1.15"/></svg><div class="l" style="left:1112.8px;top:394.3px;width:74.2px;height:21.6px;border:1px solid #464646;border-radius:2px;background:#4f4f4f;color:#262626;font-weight:500;padding-left:7px;padding-bottom:0.8px;">结束日期</div><div class="l" style="left:1190.6px;top:394.3px;width:47px;height:21.6px;border:1px solid #464646;border-radius:2px;background:#4f4f4f;color:#222;padding-left:7.8px;letter-spacing:-0.4px;padding-top:0.8px;">130PX</div><svg style="left:1242.6px;top:400.0px;width:11.2px;height:11.2px" viewBox="0 0 10 10" fill="none" stroke="#1e1e1e" stroke-width="0.95"><path d="M2.2 6.4 L6.4 1.5 L8 3 L3.8 7.8 L1.9 8.1 Z"/><path d="M0.7 9.4 H9.3"/></svg><svg style="left:1261.0px;top:400.2px;width:12px;height:11px" viewBox="0 0 12 11" fill="none" stroke="#1e1e1e" stroke-width="0.95"><path d="M0.4 2.6 H11.6 M3.6 2.4 V1.3 Q3.6 0.6 4.3 0.6 H7.7 Q8.4 0.6 8.4 1.3 V2.4 M2.1 2.8 V9.2 Q2.1 10.4 3.3 10.4 H8.7 Q9.9 10.4 9.9 9.2 V2.8"/><path d="M5 4.3 V8.3 M7 4.3 V8.3" stroke-width="0.7"/></svg>
<svg style="left:1086px;top:430.40px;width:5px;height:9px" viewBox="0 0 5 9" fill="#33384a"><circle cx="1" cy="1" r="0.8"/><circle cx="4" cy="1" r="0.8"/><circle cx="1" cy="3.3" r="0.8"/><circle cx="4" cy="3.3" r="0.8"/><circle cx="1" cy="5.6" r="0.8"/><circle cx="4" cy="5.6" r="0.8"/><circle cx="1" cy="7.9" r="0.8"/><circle cx="4" cy="7.9" r="0.8"/></svg><svg style="left:1098px;top:429.30px;width:10.8px;height:10.8px" viewBox="0 0 10.8 10.8"><rect width="10.8" height="10.8" rx="1.8" fill="#011b5e"/><path d="M2.6 5.5 L4.7 7.5 L8.3 3.6" fill="none" stroke="#7d87a2" stroke-width="1.15"/></svg><div class="l" style="left:1112.8px;top:423.8px;width:74.2px;height:21.6px;border:1px solid #464646;border-radius:2px;background:#4f4f4f;color:#262626;font-weight:500;padding-left:7px;padding-bottom:0.8px;">任务单编号</div><div class="l" style="left:1190.6px;top:423.8px;width:47px;height:21.6px;border:1px solid #464646;border-radius:2px;background:#4f4f4f;color:#222;padding-left:7.8px;letter-spacing:-0.4px;padding-top:0.8px;">200PX</div><svg style="left:1242.6px;top:429.5px;width:11.2px;height:11.2px" viewBox="0 0 10 10" fill="none" stroke="#1e1e1e" stroke-width="0.95"><path d="M2.2 6.4 L6.4 1.5 L8 3 L3.8 7.8 L1.9 8.1 Z"/><path d="M0.7 9.4 H9.3"/></svg><svg style="left:1261.0px;top:429.7px;width:12px;height:11px" viewBox="0 0 12 11" fill="none" stroke="#1e1e1e" stroke-width="0.95"><path d="M0.4 2.6 H11.6 M3.6 2.4 V1.3 Q3.6 0.6 4.3 0.6 H7.7 Q8.4 0.6 8.4 1.3 V2.4 M2.1 2.8 V9.2 Q2.1 10.4 3.3 10.4 H8.7 Q9.9 10.4 9.9 9.2 V2.8"/><path d="M5 4.3 V8.3 M7 4.3 V8.3" stroke-width="0.7"/></svg>
<svg style="left:1086px;top:459.90px;width:5px;height:9px" viewBox="0 0 5 9" fill="#33384a"><circle cx="1" cy="1" r="0.8"/><circle cx="4" cy="1" r="0.8"/><circle cx="1" cy="3.3" r="0.8"/><circle cx="4" cy="3.3" r="0.8"/><circle cx="1" cy="5.6" r="0.8"/><circle cx="4" cy="5.6" r="0.8"/><circle cx="1" cy="7.9" r="0.8"/><circle cx="4" cy="7.9" r="0.8"/></svg><svg style="left:1098px;top:458.80px;width:10.8px;height:10.8px" viewBox="0 0 10.8 10.8"><rect width="10.8" height="10.8" rx="1.8" fill="#011b5e"/><path d="M2.6 5.5 L4.7 7.5 L8.3 3.6" fill="none" stroke="#7d87a2" stroke-width="1.15"/></svg><div class="l" style="left:1112.8px;top:453.3px;width:74.2px;height:21.6px;border:1px solid #464646;border-radius:2px;background:#4f4f4f;color:#262626;font-weight:500;padding-left:7px;padding-bottom:0.8px;">检测项目</div><div class="l" style="left:1190.6px;top:453.3px;width:47px;height:21.6px;border:1px solid #464646;border-radius:2px;background:#4f4f4f;color:#222;padding-left:7.8px;letter-spacing:-0.4px;padding-top:0.8px;">180PX</div><svg style="left:1242.6px;top:459.0px;width:11.2px;height:11.2px" viewBox="0 0 10 10" fill="none" stroke="#1e1e1e" stroke-width="0.95"><path d="M2.2 6.4 L6.4 1.5 L8 3 L3.8 7.8 L1.9 8.1 Z"/><path d="M0.7 9.4 H9.3"/></svg><svg style="left:1261.0px;top:459.2px;width:12px;height:11px" viewBox="0 0 12 11" fill="none" stroke="#1e1e1e" stroke-width="0.95"><path d="M0.4 2.6 H11.6 M3.6 2.4 V1.3 Q3.6 0.6 4.3 0.6 H7.7 Q8.4 0.6 8.4 1.3 V2.4 M2.1 2.8 V9.2 Q2.1 10.4 3.3 10.4 H8.7 Q9.9 10.4 9.9 9.2 V2.8"/><path d="M5 4.3 V8.3 M7 4.3 V8.3" stroke-width="0.7"/></svg>
<svg style="left:1086px;top:489.40px;width:5px;height:9px" viewBox="0 0 5 9" fill="#33384a"><circle cx="1" cy="1" r="0.8"/><circle cx="4" cy="1" r="0.8"/><circle cx="1" cy="3.3" r="0.8"/><circle cx="4" cy="3.3" r="0.8"/><circle cx="1" cy="5.6" r="0.8"/><circle cx="4" cy="5.6" r="0.8"/><circle cx="1" cy="7.9" r="0.8"/><circle cx="4" cy="7.9" r="0.8"/></svg><div style="left:1098px;top:488.3px;width:10.8px;height:10.8px;border:1px solid #474747;border-radius:2px;background:#4e4e4e;"></div><div class="l" style="left:1112.8px;top:482.8px;width:74.2px;height:21.6px;border:1px solid #464646;border-radius:2px;background:#4f4f4f;color:#262626;font-weight:500;padding-left:7px;padding-bottom:0.8px;">备注</div><div class="l" style="left:1190.6px;top:482.8px;width:47px;height:21.6px;border:1px solid #464646;border-radius:2px;background:#4f4f4f;color:#222;padding-left:7.8px;letter-spacing:-0.4px;padding-top:0.8px;">200PX</div><svg style="left:1242.6px;top:488.5px;width:11.2px;height:11.2px" viewBox="0 0 10 10" fill="none" stroke="#1e1e1e" stroke-width="0.95"><path d="M2.2 6.4 L6.4 1.5 L8 3 L3.8 7.8 L1.9 8.1 Z"/><path d="M0.7 9.4 H9.3"/></svg><svg style="left:1261.0px;top:488.7px;width:12px;height:11px" viewBox="0 0 12 11" fill="none" stroke="#1e1e1e" stroke-width="0.95"><path d="M0.4 2.6 H11.6 M3.6 2.4 V1.3 Q3.6 0.6 4.3 0.6 H7.7 Q8.4 0.6 8.4 1.3 V2.4 M2.1 2.8 V9.2 Q2.1 10.4 3.3 10.4 H8.7 Q9.9 10.4 9.9 9.2 V2.8"/><path d="M5 4.3 V8.3 M7 4.3 V8.3" stroke-width="0.7"/></svg>
<svg style="left:1086px;top:518.90px;width:5px;height:9px" viewBox="0 0 5 9" fill="#33384a"><circle cx="1" cy="1" r="0.8"/><circle cx="4" cy="1" r="0.8"/><circle cx="1" cy="3.3" r="0.8"/><circle cx="4" cy="3.3" r="0.8"/><circle cx="1" cy="5.6" r="0.8"/><circle cx="4" cy="5.6" r="0.8"/><circle cx="1" cy="7.9" r="0.8"/><circle cx="4" cy="7.9" r="0.8"/></svg><div style="left:1098px;top:517.8px;width:10.8px;height:10.8px;border:1px solid #474747;border-radius:2px;background:#4e4e4e;"></div><div class="l" style="left:1112.8px;top:512.3px;width:74.2px;height:21.6px;border:1px solid #464646;border-radius:2px;background:#4f4f4f;color:#262626;font-weight:500;padding-left:7px;padding-bottom:0.8px;">存放区域</div><div class="l" style="left:1190.6px;top:512.3px;width:47px;height:21.6px;border:1px solid #464646;border-radius:2px;background:#4f4f4f;color:#222;padding-left:7.8px;letter-spacing:-0.4px;padding-top:0.8px;">200PX</div><svg style="left:1242.6px;top:518.0px;width:11.2px;height:11.2px" viewBox="0 0 10 10" fill="none" stroke="#1e1e1e" stroke-width="0.95"><path d="M2.2 6.4 L6.4 1.5 L8 3 L3.8 7.8 L1.9 8.1 Z"/><path d="M0.7 9.4 H9.3"/></svg><svg style="left:1261.0px;top:518.2px;width:12px;height:11px" viewBox="0 0 12 11" fill="none" stroke="#1e1e1e" stroke-width="0.95"><path d="M0.4 2.6 H11.6 M3.6 2.4 V1.3 Q3.6 0.6 4.3 0.6 H7.7 Q8.4 0.6 8.4 1.3 V2.4 M2.1 2.8 V9.2 Q2.1 10.4 3.3 10.4 H8.7 Q9.9 10.4 9.9 9.2 V2.8"/><path d="M5 4.3 V8.3 M7 4.3 V8.3" stroke-width="0.7"/></svg>
<svg style="left:1086px;top:548.40px;width:5px;height:9px" viewBox="0 0 5 9" fill="#33384a"><circle cx="1" cy="1" r="0.8"/><circle cx="4" cy="1" r="0.8"/><circle cx="1" cy="3.3" r="0.8"/><circle cx="4" cy="3.3" r="0.8"/><circle cx="1" cy="5.6" r="0.8"/><circle cx="4" cy="5.6" r="0.8"/><circle cx="1" cy="7.9" r="0.8"/><circle cx="4" cy="7.9" r="0.8"/></svg><div style="left:1098px;top:547.3px;width:10.8px;height:10.8px;border:1px solid #474747;border-radius:2px;background:#4e4e4e;"></div><div class="l" style="left:1112.8px;top:541.8px;width:74.2px;height:21.6px;border:1px solid #464646;border-radius:2px;background:#4f4f4f;color:#262626;font-weight:500;padding-left:7px;padding-bottom:0.8px;">是否预约</div><div class="l" style="left:1190.6px;top:541.8px;width:47px;height:21.6px;border:1px solid #464646;border-radius:2px;background:#4f4f4f;color:#222;padding-left:7.8px;letter-spacing:-0.4px;padding-top:0.8px;">200PX</div><svg style="left:1242.6px;top:547.5px;width:11.2px;height:11.2px" viewBox="0 0 10 10" fill="none" stroke="#1e1e1e" stroke-width="0.95"><path d="M2.2 6.4 L6.4 1.5 L8 3 L3.8 7.8 L1.9 8.1 Z"/><path d="M0.7 9.4 H9.3"/></svg><svg style="left:1261.0px;top:547.7px;width:12px;height:11px" viewBox="0 0 12 11" fill="none" stroke="#1e1e1e" stroke-width="0.95"><path d="M0.4 2.6 H11.6 M3.6 2.4 V1.3 Q3.6 0.6 4.3 0.6 H7.7 Q8.4 0.6 8.4 1.3 V2.4 M2.1 2.8 V9.2 Q2.1 10.4 3.3 10.4 H8.7 Q9.9 10.4 9.9 9.2 V2.8"/><path d="M5 4.3 V8.3 M7 4.3 V8.3" stroke-width="0.7"/></svg>
<svg style="left:1086px;top:577.90px;width:5px;height:9px" viewBox="0 0 5 9" fill="#33384a"><circle cx="1" cy="1" r="0.8"/><circle cx="4" cy="1" r="0.8"/><circle cx="1" cy="3.3" r="0.8"/><circle cx="4" cy="3.3" r="0.8"/><circle cx="1" cy="5.6" r="0.8"/><circle cx="4" cy="5.6" r="0.8"/><circle cx="1" cy="7.9" r="0.8"/><circle cx="4" cy="7.9" r="0.8"/></svg><div style="left:1098px;top:576.8px;width:10.8px;height:10.8px;border:1px solid #474747;border-radius:2px;background:#4e4e4e;"></div><div class="l" style="left:1112.8px;top:571.3px;width:74.2px;height:21.6px;border:1px solid #464646;border-radius:2px;background:#4f4f4f;color:#262626;font-weight:500;padding-left:7px;padding-bottom:0.8px;">主键</div><div class="l" style="left:1190.6px;top:571.3px;width:47px;height:21.6px;border:1px solid #464646;border-radius:2px;background:#4f4f4f;color:#222;padding-left:7.8px;letter-spacing:-0.4px;padding-top:0.8px;">200PX</div>
<svg style="left:1086px;top:607.40px;width:5px;height:9px" viewBox="0 0 5 9" fill="#33384a"><circle cx="1" cy="1" r="0.8"/><circle cx="4" cy="1" r="0.8"/><circle cx="1" cy="3.3" r="0.8"/><circle cx="4" cy="3.3" r="0.8"/><circle cx="1" cy="5.6" r="0.8"/><circle cx="4" cy="5.6" r="0.8"/><circle cx="1" cy="7.9" r="0.8"/><circle cx="4" cy="7.9" r="0.8"/></svg><div style="left:1098px;top:606.3px;width:10.8px;height:10.8px;border:1px solid #474747;border-radius:2px;background:#4e4e4e;"></div><div class="l" style="left:1112.8px;top:600.8px;width:74.2px;height:21.6px;border:1px solid #464646;border-radius:2px;background:#4f4f4f;color:#262626;font-weight:500;padding-left:7px;padding-bottom:0.8px;">外键</div><div class="l" style="left:1190.6px;top:600.8px;width:47px;height:21.6px;border:1px solid #464646;border-radius:2px;background:#4f4f4f;color:#222;padding-left:7.8px;letter-spacing:-0.4px;padding-top:0.8px;">200PX</div>
<svg style="left:1086px;top:636.90px;width:5px;height:9px" viewBox="0 0 5 9" fill="#33384a"><circle cx="1" cy="1" r="0.8"/><circle cx="4" cy="1" r="0.8"/><circle cx="1" cy="3.3" r="0.8"/><circle cx="4" cy="3.3" r="0.8"/><circle cx="1" cy="5.6" r="0.8"/><circle cx="4" cy="5.6" r="0.8"/><circle cx="1" cy="7.9" r="0.8"/><circle cx="4" cy="7.9" r="0.8"/></svg><div style="left:1098px;top:635.8px;width:10.8px;height:10.8px;border:1px solid #474747;border-radius:2px;background:#4e4e4e;"></div><div class="l" style="left:1112.8px;top:630.3px;width:74.2px;height:21.6px;border:1px solid #464646;border-radius:2px;background:#4f4f4f;color:#262626;font-weight:500;padding-left:7px;padding-bottom:0.8px;">创建人</div><div class="l" style="left:1190.6px;top:630.3px;width:47px;height:21.6px;border:1px solid #464646;border-radius:2px;background:#4f4f4f;color:#222;padding-left:7.8px;letter-spacing:-0.4px;padding-top:0.8px;">200PX</div>
<!-- modal -->
<div style="left:240px;top:65.5px;width:806px;height:497.8px;background:#fff;border-radius:2px;box-shadow:0 1px 6px rgba(0,0,0,.5);"></div><div class="l" style="left:261.3px;top:79.0px;width:80px;height:20px;font-size:10.67px;color:#333;">权限规则</div><div class="l" style="left:879px;top:78.7px;width:93.5px;height:20px;font-size:10.67px;color:#333;justify-content:flex-end;">启用多组规则</div><svg style="left:977.5px;top:83.3px;width:12.4px;height:12.4px" viewBox="0 0 12.4 12.4" fill="none" stroke="#666" stroke-width="0.8"><circle cx="6.2" cy="6.2" r="5.6"/><path d="M4.5 5 C4.5 2.9 7.9 2.9 7.9 5 C7.9 6.2 6.2 6.2 6.2 7.6" stroke-width="0.9"/><circle cx="6.2" cy="9.3" r="0.55" fill="#666" stroke="none"/></svg>
<div style="left:994.8px;top:82px;width:29.2px;height:14.7px;background:#0555f5;border-radius:8px;"><div style="left:15.8px;top:1.4px;width:12px;height:12px;background:#fff;border-radius:6px;"></div></div><div style="left:261.0px;top:117.8px;width:762.8px;height:376.0px;border:1px solid #e6e6e6;background:#fff;"></div><div style="left:517px;top:184.3px;width:505.8px;height:308.5px;background:#f6f6f6;"></div><div style="left:516.6px;top:118px;width:1px;height:375.6px;background:#e6e6e6;"></div><div style="left:517px;top:184px;width:506px;height:1px;background:#eee;"></div><div style="left:262px;top:160.2px;width:255px;height:1px;background:#e9e9e9;"></div><div class="l" style="left:277.5px;top:129.2px;width:80px;height:20px;color:#2468f2;">新增规则组</div><svg style="left:491.5px;top:135.8px;width:8px;height:8px" viewBox="0 0 8 8" stroke="#3a78f5" stroke-width="0.9" fill="none"><path d="M4 0.3 V7.7 M0.3 4 H7.7"/></svg>
<div style="left:304px;top:193px;width:22px;height:19.5px;border-left:1px solid #dcdcdc;border-top:1px solid #dcdcdc;border-top-left-radius:1px;"></div><div style="left:324.6px;top:191.8px;width:3.2px;height:3.2px;background:#d4d4d4;border-radius:50%;"></div><div style="left:282.7px;top:214.7px;width:40.3px;height:16px;border:1px solid #e8e8e8;border-radius:3px;background:#fff;"></div><div class="c" style="left:285.2px;top:212px;width:40.4px;height:15.8px;border:1px solid #dedede;border-radius:3px;background:#ebebeb;font-size:8px;color:#999;padding-right:3.6px;">同时满足</div><div style="left:336.2px;top:177.2px;width:164.4px;height:33.6px;border:1.2px solid #3f7fff;border-radius:3px;background:#fff;"></div><div class="l" style="left:347.5px;top:183.5px;width:60px;height:20px;color:#2468f2;">规则组1</div><svg style="left:477.3px;top:187.4px;width:12px;height:11px" viewBox="0 0 12 11" fill="none" stroke="#999" stroke-width="0.95"><path d="M0.4 2.6 H11.6 M3.6 2.4 V1.3 Q3.6 0.6 4.3 0.6 H7.7 Q8.4 0.6 8.4 1.3 V2.4 M2.1 2.8 V9.2 Q2.1 10.4 3.3 10.4 H8.7 Q9.9 10.4 9.9 9.2 V2.8"/><path d="M5 4.3 V8.3 M7 4.3 V8.3" stroke-width="0.7"/></svg>
<div class="l" style="left:528.3px;top:131.5px;width:80px;height:20px;font-size:10.67px;color:#555;">分组名称:</div><div class="l" style="left:528.3px;top:149.0px;width:134.6px;height:21.9px;border:1px solid #e0e0e0;border-radius:3px;background:#fff;color:#555;padding-left:8px;padding-bottom:0.8px;">规则组1</div><div style="left:893.5px;top:146.1px;width:11.2px;height:11.2px;border:1.1px solid #1a5cff;border-radius:50%;background:#fff;"><div style="left:1.9px;top:1.9px;width:5.2px;height:5.2px;background:#0f52ff;border-radius:50%;"></div></div><div class="l" style="left:909.8px;top:142px;width:50px;height:20px;color:#444;">同时满足</div><div style="left:957.9px;top:146.1px;width:11.2px;height:11.2px;border:1px solid #dcdcdc;border-radius:50%;background:#fff;"></div><div class="l" style="left:974.3px;top:142px;width:50px;height:20px;color:#444;">单个满足</div><div style="left:524.9px;top:196.0px;width:74.0px;height:21.4px;border:1px solid #e3e3e3;border-radius:3px;background:#fff;"><span class="l" style="left:7px;top:-0.8px;height:19.4px;color:#555;">组件</span><svg style="right:6.5px;top:8.2px;width:7.4px;height:4.6px" viewBox="0 0 7.4 4.6" fill="none" stroke="#b5b5b5" stroke-width="0.8"><path d="M0.4 0.5 L3.7 3.9 L7 0.5"/></svg></div>
<div style="left:606.7px;top:196.0px;width:92.6px;height:21.4px;border:1px solid #e3e3e3;border-radius:3px;background:#fff;"><span class="l" style="left:7px;top:-0.8px;height:19.4px;color:#555;">创建人</span><svg style="right:6.5px;top:8.2px;width:7.4px;height:4.6px" viewBox="0 0 7.4 4.6" fill="none" stroke="#b5b5b5" stroke-width="0.8"><path d="M0.4 0.5 L3.7 3.9 L7 0.5"/></svg></div>
<div style="left:708.5px;top:196.0px;width:65.7px;height:21.4px;border:1px solid #e3e3e3;border-radius:3px;background:#fff;"><span class="l" style="left:7px;top:-0.8px;height:19.4px;color:#555;">在...之内</span><svg style="right:6.5px;top:8.2px;width:7.4px;height:4.6px" viewBox="0 0 7.4 4.6" fill="none" stroke="#b5b5b5" stroke-width="0.8"><path d="M0.4 0.5 L3.7 3.9 L7 0.5"/></svg></div>
<div style="left:780.1px;top:196.0px;width:65.0px;height:21.4px;border:1px solid #e3e3e3;border-radius:3px;background:#fff;"><span class="l" style="left:7px;top:-0.8px;height:19.4px;color:#555;">变量</span><svg style="right:6.5px;top:8.2px;width:7.4px;height:4.6px" viewBox="0 0 7.4 4.6" fill="none" stroke="#b5b5b5" stroke-width="0.8"><path d="M0.4 0.5 L3.7 3.9 L7 0.5"/></svg></div>
<div style="left:851.6px;top:196.0px;width:144.2px;height:21.4px;border:1px solid #e3e3e3;border-radius:3px;background:#fff;"><span class="l" style="left:7px;top:-0.8px;height:19.4px;color:#555;">当前用户ID</span><svg style="right:6.5px;top:8.2px;width:7.4px;height:4.6px" viewBox="0 0 7.4 4.6" fill="none" stroke="#b5b5b5" stroke-width="0.8"><path d="M0.4 0.5 L3.7 3.9 L7 0.5"/></svg></div>
<svg style="left:1003.3px;top:199.8px;width:12px;height:11px" viewBox="0 0 12 11" fill="none" stroke="#666" stroke-width="0.95"><path d="M0.4 2.6 H11.6 M3.6 2.4 V1.3 Q3.6 0.6 4.3 0.6 H7.7 Q8.4 0.6 8.4 1.3 V2.4 M2.1 2.8 V9.2 Q2.1 10.4 3.3 10.4 H8.7 Q9.9 10.4 9.9 9.2 V2.8"/><path d="M5 4.3 V8.3 M7 4.3 V8.3" stroke-width="0.7"/></svg>
<svg style="left:524.9px;top:224.2px;width:450px;height:24.4px" viewBox="0 0 450 24.4"><rect x="0.5" y="0.5" width="449" height="23.4" rx="2" fill="#fff" stroke="#d4d4d4" stroke-width="1" stroke-dasharray="1.5 1.5"/></svg>
<svg style="left:734px;top:231.8px;width:8px;height:8px" viewBox="0 0 8 8" stroke="#333" stroke-width="1.3" fill="none"><path d="M4 0.3 V7.7 M0.3 4 H7.7"/></svg>
<div class="l" style="left:747.7px;top:225.7px;width:30px;height:20px;font-size:9.33px;color:#444;">新增</div><div class="c" style="left:551.5px;top:520.5px;width:86px;height:27px;background:#0452f2;border-radius:2px;color:#fff;font-weight:bold;">确 认</div><div class="c" style="left:648.2px;top:520.5px;width:85.7px;height:27px;border:1px solid #e0e0e0;border-radius:2px;background:#fff;color:#555;">取 消</div><!-- watermark -->
<div class="l" style="left:1093px;top:600.6px;width:185px;height:26px;font-size:19.6px;color:#dcdcdc;text-shadow:1px 1px 1px #1a1a1a,0 0 2px #333;"><i style="font-style:normal;font-size:18.4px;letter-spacing:-0.55px;position:relative;top:0.4px">CSDN @</i>程序员洲洲</div></div>
</body>
</html>
